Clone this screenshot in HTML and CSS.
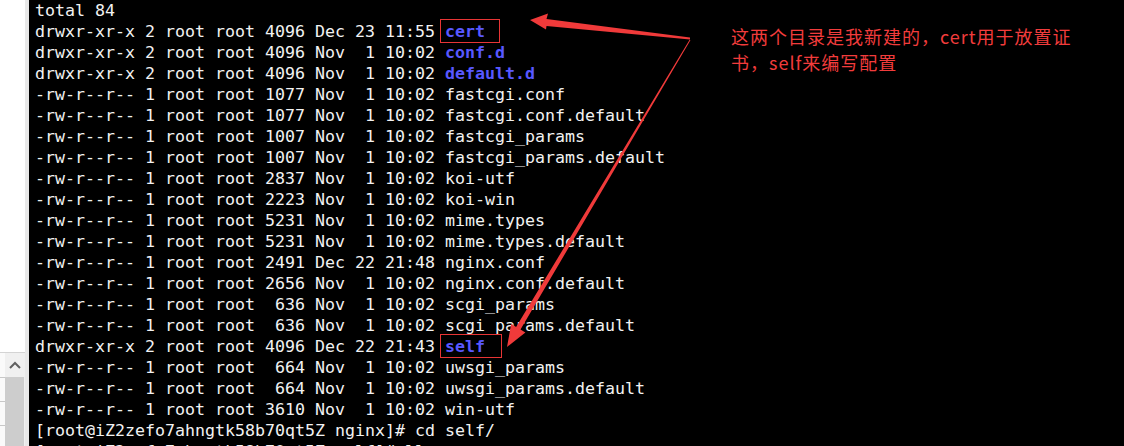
FILE: index.html
```html
<!DOCTYPE html>
<html lang="zh">
<head>
<meta charset="utf-8">
<link rel="stylesheet" href="styles.css">
</head>
<body>
<div class="screen">
  <aside class="side">
    <div class="side-top"></div>
    <div class="side-bottom">
      <div class="rows"><span></span><span></span><span></span></div>
      <div class="scroll">
        <div class="scroll-up"><svg width="12" height="8" viewBox="0 0 12 8"><path d="M1 7 L6 2 L11 7" fill="none" stroke="#606060" stroke-width="2"/></svg></div>
        <div class="thumb"></div>
      </div>
    </div>
  </aside>
  <pre class="term">total 84
drwxr-xr-x 2 root root 4096 Dec 23 11:55 <b class="dir boxed">cert</b>
drwxr-xr-x 2 root root 4096 Nov  1 10:02 <b class="dir">conf.d</b>
drwxr-xr-x 2 root root 4096 Nov  1 10:02 <b class="dir">default.d</b>
-rw-r--r-- 1 root root 1077 Nov  1 10:02 fastcgi.conf
-rw-r--r-- 1 root root 1077 Nov  1 10:02 fastcgi.conf.default
-rw-r--r-- 1 root root 1007 Nov  1 10:02 fastcgi_params
-rw-r--r-- 1 root root 1007 Nov  1 10:02 fastcgi_params.default
-rw-r--r-- 1 root root 2837 Nov  1 10:02 koi-utf
-rw-r--r-- 1 root root 2223 Nov  1 10:02 koi-win
-rw-r--r-- 1 root root 5231 Nov  1 10:02 mime.types
-rw-r--r-- 1 root root 5231 Nov  1 10:02 mime.types.default
-rw-r--r-- 1 root root 2491 Dec 22 21:48 nginx.conf
-rw-r--r-- 1 root root 2656 Nov  1 10:02 nginx.conf.default
-rw-r--r-- 1 root root  636 Nov  1 10:02 scgi_params
-rw-r--r-- 1 root root  636 Nov  1 10:02 scgi_params.default
drwxr-xr-x 2 root root 4096 Dec 22 21:43 <b class="dir boxed self">self</b>
-rw-r--r-- 1 root root  664 Nov  1 10:02 uwsgi_params
-rw-r--r-- 1 root root  664 Nov  1 10:02 uwsgi_params.default
-rw-r--r-- 1 root root 3610 Nov  1 10:02 win-utf
[root@iZ2zefo7ahngtk58b70qt5Z nginx]# cd self/
[root@iZ2zefo7ahngtk58b70qt5Z self]# ll</pre>
  <p class="note">这两个目录是我新建的，cert用于放置证书，self来编写配置</p>
  <svg class="arrows" width="1124" height="446" viewBox="0 0 1124 446">
    <polygon points="530,20 548,13.5 546.5,19 690,37.5 690,39.5 546.5,26 546,29.5" fill="#f03a3a"/>
    <polygon points="507,347 511.2,323.8 516.1,327 689.6,39.7 690.4,40.3 520.5,329.6 525.4,332.4" fill="#f03a3a"/>
  </svg>
</div>
</body>
</html>
```
FILE: styles.css
```css
html, body {
  margin: 0;
  padding: 0;
  background: #000;
}
.screen {
  position: relative;
  display: flex;
  width: 1124px;
  height: 446px;
  overflow: hidden;
  background: #000;
}
.side {
  width: 25px;
  flex: none;
  display: flex;
  flex-direction: column;
  border-right: 4px solid #e8e8e8;
  background: #fff;
}
.side-top {
  height: 352px;
  background: #fff;
}
.side-bottom {
  flex: 1;
  display: flex;
  border-top: 1px solid #d4d4d4;
  background: #f0f0f0;
}
.rows {
  width: 5px;
  display: flex;
  flex-direction: column;
  padding-top: 24px;
  gap: 23px;
  background: #fafafa;
}
.rows span {
  display: block;
  height: 1px;
  background: #c8c8c8;
}
.scroll {
  width: 19px;
  display: flex;
  flex-direction: column;
  background: #f0f0f0;
}
.scroll-up {
  height: 24px;
  display: flex;
  align-items: center;
  justify-content: center;
}
.thumb {
  flex: 1;
  background: #cdcdcd;
}
.term {
  margin: 0;
  padding: 0 0 0 6px;
  width: 696px;
  flex: none;
  font-family: "DejaVu Sans Mono", monospace;
  font-size: 16.61px;
  line-height: 21px;
  color: #f2f2f2;
  white-space: pre;
}
.dir {
  color: #5858ff;
  font-weight: bold;
}
.boxed {
  outline: 1.5px solid #e83535;
  outline-offset: 0;
  padding: 2px 14px 1px 4px;
  margin-left: -4px;
}
.boxed.self {
  padding-right: 16px;
}
.note {
  margin: 0;
  padding-top: 23px;
  width: 362px;
  flex: none;
  font-family: "Noto Sans CJK SC", "Noto Sans", sans-serif;
  font-size: 18px;
  letter-spacing: 1px;
  line-height: 26px;
  color: #f23c3c;
}
.arrows {
  position: absolute;
  left: 0;
  top: 0;
  pointer-events: none;
}
```
